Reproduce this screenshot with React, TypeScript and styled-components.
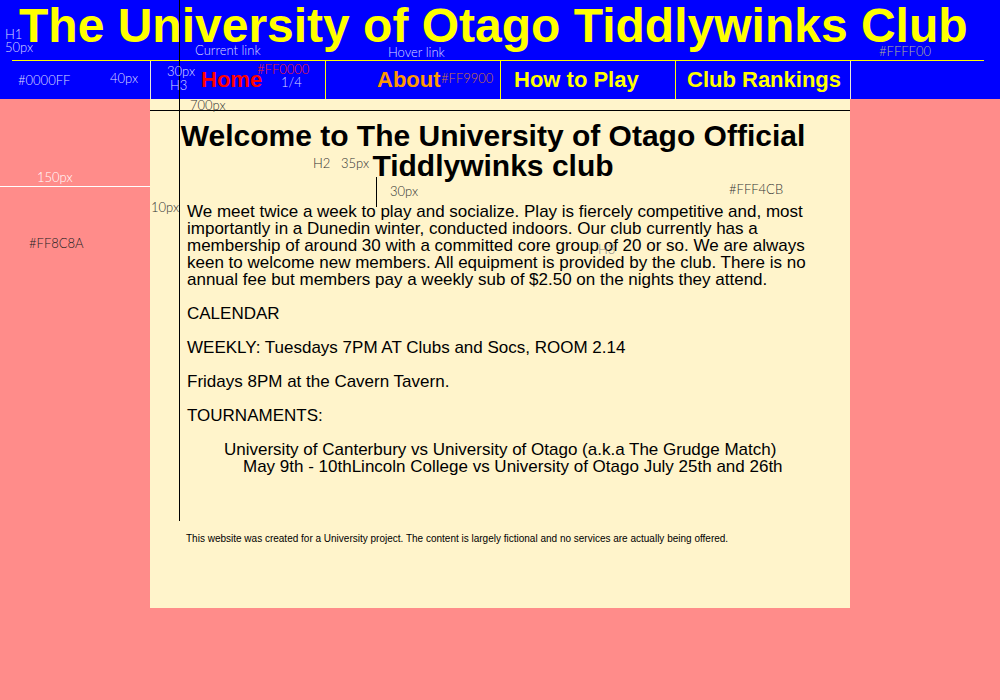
import React from "react";
import styled, { createGlobalStyle } from "styled-components";

const GlobalStyle = createGlobalStyle`
  html, body { margin: 0; padding: 0; }
  body {
    background: #ff8c8a;
    font-family: "Liberation Sans", Arial, Helvetica, sans-serif;
    color: #000;
  }
`;

const Page = styled.div`
  position: relative;
  width: 1000px;
  height: 700px;
  overflow: hidden;
  background: #ff8c8a;
`;

const Header = styled.header`
  background: #0000ff;
`;

const TitleBar = styled.div`
  height: 58px;
  padding: 2px 0 0 7px;
  margin: 0 16px 0 12px;
  border-bottom: 1px solid #ffff00;
`;

const Title = styled.h1`
  margin: 0;
  font-size: 48px;
  line-height: 48px;
  font-weight: bold;
  color: #ffff00;
  white-space: nowrap;
`;

const NavRow = styled.nav`
  display: flex;
  height: 38px;
  padding-left: 150px;
`;

const NavList = styled.ul`
  display: flex;
  margin: 0;
  padding: 0;
  list-style: none;
  border-left: 1px solid #e8e8d8;
`;

const NavItem = styled.li<{ $offset: number; $last?: boolean }>`
  box-sizing: border-box;
  width: 175px;
  height: 38px;
  padding: 2px 0 0 ${(p) => p.$offset}px;
  border-right: 1px solid ${(p) => (p.$last ? "#e8e8d8" : "#ffff00")};
`;

const NavLink = styled.a<{ $color: string }>`
  display: block;
  font-size: 22px;
  line-height: 34px;
  font-weight: bold;
  color: ${(p) => p.$color};
  text-decoration: none;
  white-space: nowrap;
`;

const Main = styled.main`
  display: flex;
  padding-left: 150px;
`;

const Content = styled.section`
  box-sizing: border-box;
  width: 700px;
  height: 509px;
  padding: 22px 37px 0 37px;
  background: #fff4cb;
`;

const Heading = styled.h2`
  margin: 0 -20px 22px -34px;
  font-size: 30px;
  line-height: 30px;
  font-weight: bold;
  text-align: center;
  white-space: nowrap;
`;

const Para = styled.p`
  margin: 0 0 17px 0;
  font-size: 17px;
  line-height: 17px;
  white-space: nowrap;
`;

const Tournaments = styled.div`
  padding-left: 37px;
  font-size: 17px;
  line-height: 17px;
  white-space: nowrap;
`;

const TourLine = styled.div<{ $indent?: number }>`
  padding-left: ${(p) => p.$indent ?? 0}px;
`;

const Footer = styled.footer`
  margin-top: 58px;
  margin-left: -1px;
  font-size: 10px;
  line-height: 12px;
  white-space: nowrap;
`;

const Note = styled.span<{ $x: number; $y: number; $color?: string }>`
  position: absolute;
  left: ${(p) => p.$x}px;
  top: ${(p) => p.$y}px;
  font-family: "Lato", "Inter", "Liberation Sans", sans-serif;
  font-weight: 300;
  font-size: 13px;
  line-height: 13px;
  color: ${(p) => p.$color ?? "#dcdcff"};
  white-space: nowrap;
  pointer-events: none;
`;

const GuideV = styled.div<{ $x: number; $y: number; $h: number; $color?: string }>`
  position: absolute;
  left: ${(p) => p.$x}px;
  top: ${(p) => p.$y}px;
  width: 1px;
  height: ${(p) => p.$h}px;
  background: ${(p) => p.$color ?? "#000"};
`;

const GuideH = styled.div<{ $x: number; $y: number; $w: number; $color?: string }>`
  position: absolute;
  left: ${(p) => p.$x}px;
  top: ${(p) => p.$y}px;
  height: 1px;
  width: ${(p) => p.$w}px;
  background: ${(p) => p.$color ?? "#000"};
`;

const navItems = [
  { label: "Home", color: "#ff0000", offset: 50 },
  { label: "About", color: "#ff9900", offset: 51 },
  { label: "How to Play", color: "#ffff00", offset: 13 },
  { label: "Club Rankings", color: "#ffff00", offset: 11 },
];

const notes: { text: string; x: number; y: number; color?: string }[] = [
  { text: "H1", x: 5, y: 28 },
  { text: "50px", x: 5, y: 41 },
  { text: "Current link", x: 195, y: 44 },
  { text: "Hover link", x: 388, y: 46 },
  { text: "#FFFF00", x: 879, y: 45, color: "#b4b490" },
  { text: "#0000FF", x: 18, y: 74 },
  { text: "40px", x: 110, y: 72 },
  { text: "30px", x: 167, y: 65 },
  { text: "H3", x: 170, y: 79 },
  { text: "#FF0000", x: 257, y: 63, color: "#ff2020" },
  { text: "1/4", x: 281, y: 76 },
  { text: "#FF9900", x: 441, y: 72, color: "#d07a30" },
  { text: "700px", x: 190, y: 99, color: "#333" },
  { text: "150px", x: 37, y: 171, color: "#fff" },
  { text: "#FF8C8A", x: 29, y: 237, color: "#222" },
  { text: "10px", x: 151, y: 201, color: "#333" },
  { text: "H2", x: 313, y: 157, color: "#333" },
  { text: "35px", x: 341, y: 157, color: "#333" },
  { text: "30px", x: 390, y: 185, color: "#333" },
  { text: "#FFF4CB", x: 729, y: 183, color: "#333" },
  { text: "H3", x: 598, y: 243, color: "#888" },
];

export default function App() {
  return (
    <>
      <GlobalStyle />
      <Page>
        <Header>
          <TitleBar>
            <Title>The University of Otago Tiddlywinks Club</Title>
          </TitleBar>
          <NavRow>
            <NavList>
              {navItems.map((n, i) => (
                <NavItem key={n.label} $offset={n.offset} $last={i === navItems.length - 1}>
                  <NavLink href="#" $color={n.color}>
                    {n.label}
                  </NavLink>
                </NavItem>
              ))}
            </NavList>
          </NavRow>
        </Header>
        <Main>
          <Content>
            <Heading>
              Welcome to The University of Otago Official
              <br />
              Tiddlywinks club
            </Heading>
            <Para>
              We meet twice a week to play and socialize. Play is fiercely competitive and, most
              <br />
              importantly in a Dunedin winter, conducted indoors. Our club currently has a
              <br />
              membership of around 30 with a committed core group of 20 or so. We are always
              <br />
              keen to welcome new members. All equipment is provided by the club. There is no
              <br />
              annual fee but members pay a weekly sub of $2.50 on the nights they attend.
            </Para>
            <Para>CALENDAR</Para>
            <Para>WEEKLY: Tuesdays 7PM AT Clubs and Socs, ROOM 2.14</Para>
            <Para>Fridays 8PM at the Cavern Tavern.</Para>
            <Para>TOURNAMENTS:</Para>
            <Tournaments>
              <TourLine>University of Canterbury vs University of Otago (a.k.a The Grudge Match)</TourLine>
              <TourLine $indent={19}>
                May 9th - 10thLincoln College vs University of Otago July 25th and 26th
              </TourLine>
            </Tournaments>
            <Footer>
              This website was created for a University project. The content is largely fictional and no
              services are actually being offered.
            </Footer>
          </Content>
        </Main>

        <GuideV $x={179} $y={0} $h={521} />
        <GuideH $x={150} $y={110} $w={700} />
        <GuideV $x={376} $y={177} $h={30} />
        <GuideH $x={0} $y={186} $w={150} $color="#fff" />
        {notes.map((n, i) => (
          <Note key={i} $x={n.x} $y={n.y} $color={n.color}>
            {n.text}
          </Note>
        ))}
      </Page>
    </>
  );
}
